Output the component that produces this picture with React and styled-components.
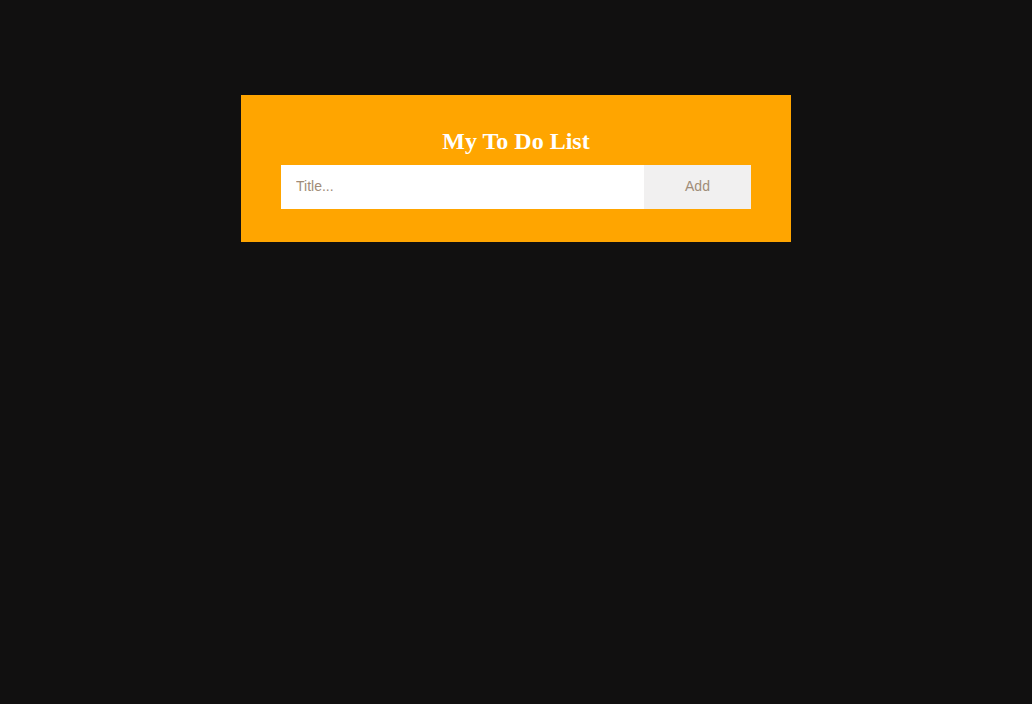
import styled, { createGlobalStyle } from 'styled-components'

const GlobalStyle = createGlobalStyle`
  html, body {
    margin: 0;
    padding: 0;
    background-color: #111010;
    min-height: 100%;
  }
`

const Page = styled.div`
  box-sizing: border-box;
  min-height: 704px;
  padding-top: 95px;
  display: flex;
  justify-content: center;
  align-items: flex-start;
`

const Header = styled.div`
  width: 550px;
  box-sizing: border-box;
  background-color: #ffa500;
  padding: 32px 40px 33px;
  text-align: center;
  color: #fff;
`

const Title = styled.h2`
  margin: 0 0 10px;
  font-family: 'Liberation Serif', 'Times New Roman', serif;
  font-size: 24px;
  font-weight: bold;
  line-height: 28px;
`

const Row = styled.div`
  display: flex;
  height: 44px;
`

const Input = styled.input`
  flex: 0 0 363px;
  box-sizing: border-box;
  border: none;
  border-radius: 0;
  outline: none;
  margin: 0;
  padding: 0 15px 2px;
  font-family: 'Liberation Sans', Arial, sans-serif;
  font-size: 14px;
  background: #fff;

  &::placeholder {
    color: #a08c78;
  }
`

const AddBtn = styled.span`
  flex: 1;
  display: flex;
  align-items: center;
  justify-content: center;
  padding-bottom: 2px;
  background: #f1f0f0;
  color: #a08c78;
  font-family: 'Liberation Sans', Arial, sans-serif;
  font-size: 14px;
  cursor: pointer;
`

const App = () => {
  return (
    <>
      <GlobalStyle />
      <Page>
        <Header>
          <Title>My To Do List</Title>
          <Row>
            <Input type='text' placeholder='Title...' />
            <AddBtn>Add</AddBtn>
          </Row>
        </Header>
      </Page>
    </>
  )
}

export default App
